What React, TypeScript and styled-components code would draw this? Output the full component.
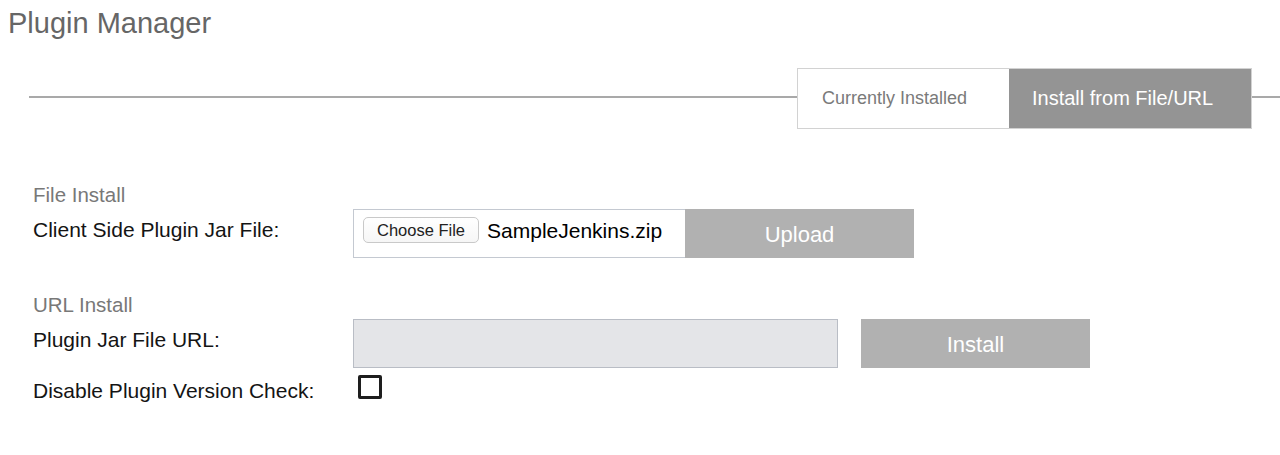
import React from "react";
import styled, { createGlobalStyle } from "styled-components";

const GlobalStyle = createGlobalStyle`
  html, body {
    margin: 0;
    padding: 0;
    background: #ffffff;
    font-family: "Liberation Sans", Arial, Helvetica, sans-serif;
  }
  * { box-sizing: border-box; }
`;

const Page = styled.div`
  width: 1280px;
  height: 455px;
  overflow: hidden;
  background: #fff;
`;

const Title = styled.h1`
  margin: 6px 0 0 8px;
  font-size: 29px;
  line-height: 34px;
  font-weight: 400;
  color: #666666;
`;

const TabBar = styled.div`
  display: flex;
  align-items: center;
  margin-top: 28px;
`;

const Rule = styled.div<{ $width?: number; $indent?: number }>`
  height: 2px;
  background: #a9a9a9;
  margin-left: ${(p) => p.$indent ?? 0}px;
  margin-bottom: 3px;
  ${(p) => (p.$width ? `width: ${p.$width}px; flex: none;` : `flex: 1;`)}
`;

const TabGroup = styled.div`
  display: flex;
  border: 1px solid #d2d2d2;
  height: 61px;
`;

const Tab = styled.div<{ $active?: boolean; $width: number }>`
  display: flex;
  align-items: center;
  width: ${(p) => p.$width}px;
  padding-left: ${(p) => (p.$active ? 23 : 24)}px;
  background: ${(p) => (p.$active ? "#949494" : "#ffffff")};
  color: ${(p) => (p.$active ? "#ffffff" : "#7a7a7a")};
  font-size: ${(p) => (p.$active ? 20 : 18)}px;
  white-space: nowrap;
`;

const Form = styled.div`
  padding-left: 33px;
`;

const SectionHeader = styled.div<{ $gap: number }>`
  margin-top: ${(p) => p.$gap}px;
  font-size: 20.5px;
  line-height: 24px;
  color: #787878;
`;

const Row = styled.div<{ $gap: number }>`
  display: flex;
  align-items: flex-start;
  margin-top: ${(p) => p.$gap}px;
`;

const Label = styled.div<{ $top: number }>`
  width: 320px;
  flex: none;
  padding-top: ${(p) => p.$top}px;
  font-size: 21px;
  line-height: 24px;
  color: #141414;
  white-space: nowrap;
`;

const FileBox = styled.div`
  display: flex;
  align-items: flex-start;
  gap: 8px;
  width: 332px;
  height: 49px;
  padding: 7px 0 0 9px;
  border: 1px solid #c4c9d1;
  border-right: none;
  background: #fff;
`;

const ChooseButton = styled.div`
  height: 26px;
  padding: 1px 13px 0;
  border: 1px solid #c9c9c9;
  border-radius: 5px;
  background: linear-gradient(#ffffff, #f6f6f6);
  font-size: 16.5px;
  line-height: 23px;
  color: #222;
  white-space: nowrap;
`;

const FileName = styled.span`
  margin-top: 2px;
  font-size: 21px;
  line-height: 24px;
  color: #000;
  white-space: nowrap;
`;

const ActionButton = styled.div<{ $margin?: number }>`
  display: flex;
  align-items: center;
  justify-content: center;
  width: 229px;
  height: 49px;
  padding-top: 3px;
  margin-left: ${(p) => p.$margin ?? 0}px;
  background: #b1b1b1;
  color: #ffffff;
  font-size: 22px;
`;

const UrlInput = styled.div`
  width: 485px;
  height: 49px;
  background: #e4e5e8;
  border: 1px solid #b9bdc5;
`;

const Checkbox = styled.div`
  width: 24px;
  height: 24px;
  margin-left: 5px;
  border: 3px solid #1e1e1e;
  border-radius: 2px;
  background: #fff;
`;

export default function App() {
  return (
    <Page>
      <GlobalStyle />
      <Title>Plugin Manager</Title>
      <TabBar>
        <Rule $indent={29} />
        <TabGroup>
          <Tab $width={211}>Currently Installed</Tab>
          <Tab $active $width={242}>
            Install from File/URL
          </Tab>
        </TabGroup>
        <Rule $width={28} />
      </TabBar>
      <Form>
        <SectionHeader $gap={54}>File Install</SectionHeader>
        <Row $gap={2}>
          <Label $top={9}>Client Side Plugin Jar File:</Label>
          <FileBox>
            <ChooseButton>Choose File</ChooseButton>
            <FileName>SampleJenkins.zip</FileName>
          </FileBox>
          <ActionButton>Upload</ActionButton>
        </Row>
        <SectionHeader $gap={35}>URL Install</SectionHeader>
        <Row $gap={2}>
          <Label $top={9}>Plugin Jar File URL:</Label>
          <UrlInput />
          <ActionButton $margin={23}>Install</ActionButton>
        </Row>
        <Row $gap={7}>
          <Label $top={4}>Disable Plugin Version Check:</Label>
          <Checkbox />
        </Row>
      </Form>
    </Page>
  );
}
